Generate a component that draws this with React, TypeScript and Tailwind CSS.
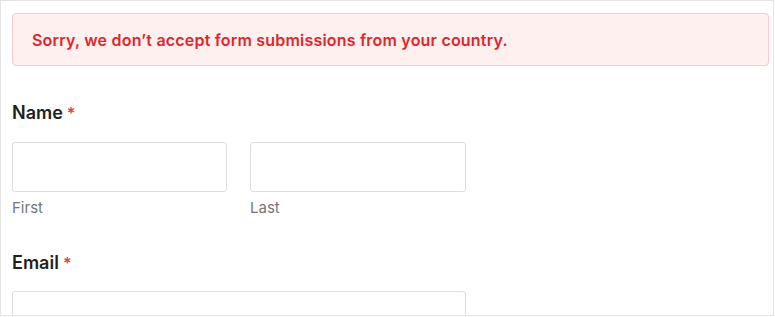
import React from "react";

export default function App() {
  return (
    <div className="w-[775px] h-[317px] bg-white overflow-hidden" style={{ fontFamily: "Inter, 'Noto Sans', sans-serif" }}>
      <div className="w-[774px] h-[316px] border border-[#e3e3e3] overflow-hidden px-[11px] pt-[12px]">
        <div className="h-[53px] w-[757px] rounded-[4px] border border-[#fbcaca] bg-[#fff0f0] flex items-center pl-[19px]">
          <span className="text-[16px] tracking-[0.2px] font-semibold text-[#e0262b] leading-none">
            Sorry, we don’t accept form submissions from your country.
          </span>
        </div>

        <div className="mt-[36px] flex items-center text-[18px] font-semibold text-[#1f1f1f] leading-[22px]">
          Name<span className="ml-[4px] text-[#e5404a] text-[16px]">*</span>
        </div>

        <div className="mt-[18px] flex gap-[23px]">
          <div className="flex flex-col w-[215px]">
            <div className="h-[50px] rounded-[3px] border border-[#dedede] bg-white" />
            <span className="mt-[7px] text-[15px] text-[#767676] leading-[18px]">First</span>
          </div>
          <div className="flex flex-col w-[216px]">
            <div className="h-[50px] rounded-[3px] border border-[#dedede] bg-white" />
            <span className="mt-[7px] text-[15px] text-[#767676] leading-[18px]">Last</span>
          </div>
        </div>

        <div className="mt-[35px] flex items-center text-[18px] font-semibold text-[#1f1f1f] leading-[22px]">
          Email<span className="ml-[4px] text-[#e5404a] text-[16px]">*</span>
        </div>

        <div className="mt-[17px] w-[454px] h-[50px] rounded-[3px] border border-[#dedede] bg-white" />
      </div>
    </div>
  );
}
